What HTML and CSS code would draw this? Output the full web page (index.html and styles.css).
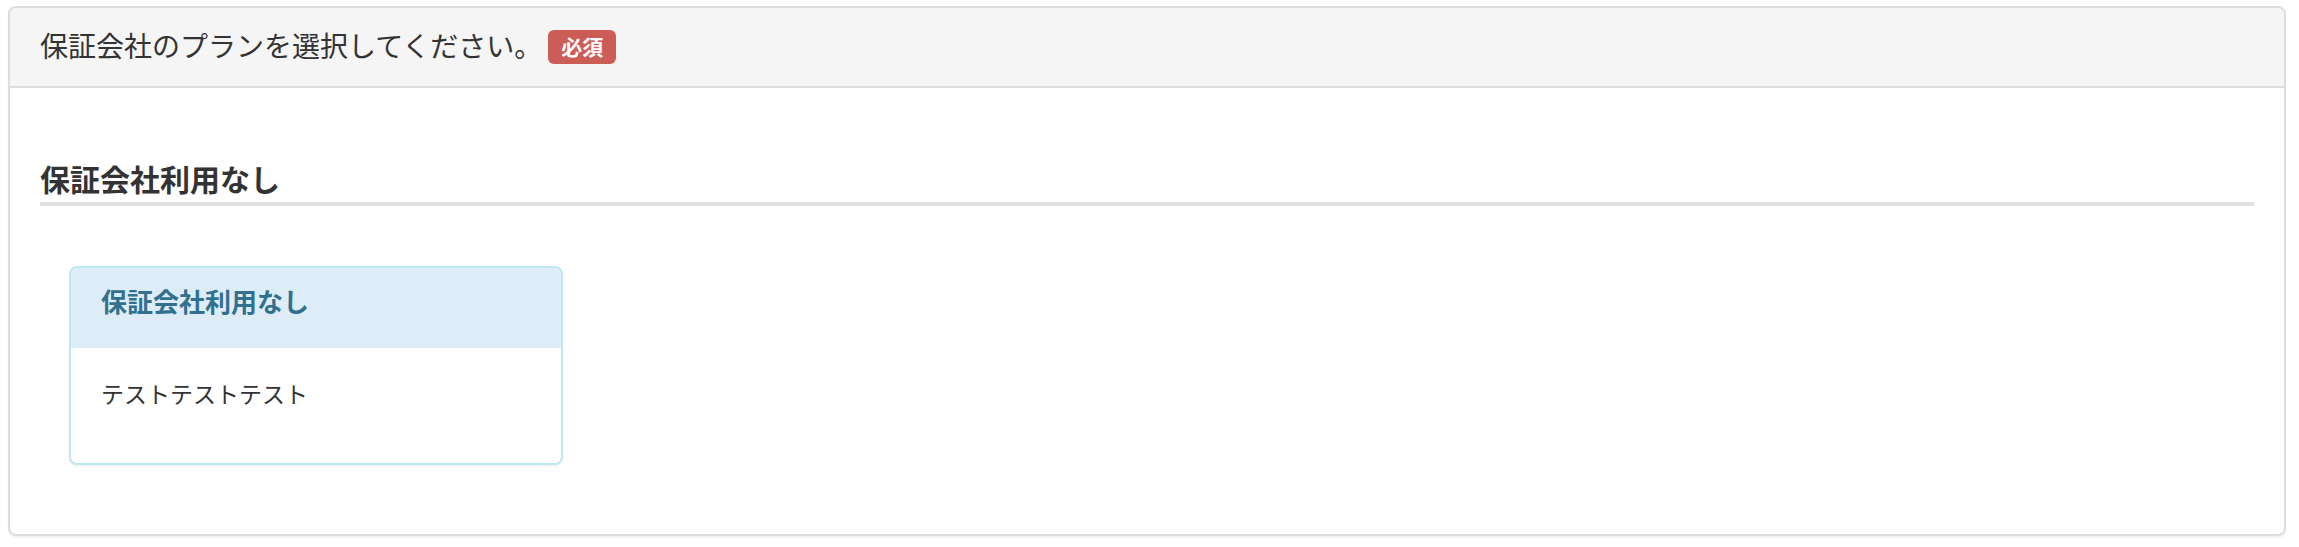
FILE: index.html
```html
<!DOCTYPE html>
<html lang="ja">
<head>
<meta charset="utf-8">
<title>保証会社のプラン選択</title>
<link rel="stylesheet" href="styles.css">
</head>
<body>
<div class="page">
  <section class="panel">
    <div class="panel-heading">
      <span class="panel-label">保証会社のプランを選択してください。</span>
      <span class="badge-required">必須</span>
    </div>
    <div class="panel-body">
      <h3 class="group-title">保証会社利用なし</h3>
      <div class="plan-list">
        <div class="plan-card">
          <div class="plan-card-heading">保証会社利用なし</div>
          <div class="plan-card-body">
            <p class="plan-desc">テストテストテスト</p>
          </div>
        </div>
      </div>
    </div>
  </section>
</div>
</body>
</html>
```

FILE: styles.css
```css
* {
  box-sizing: border-box;
}

html, body {
  margin: 0;
  padding: 0;
  background: #ffffff;
}

body {
  font-family: "Noto Sans CJK JP", "Noto Sans", sans-serif;
  color: #333333;
}

.page {
  padding: 6px 13px 12px 8px;
}

/* outer panel */
.panel {
  border: 2px solid #dddddd;
  border-radius: 8px;
  background: #ffffff;
  box-shadow: 0 2px 2px rgba(0, 0, 0, 0.05);
}

.panel-heading {
  display: flex;
  align-items: center;
  gap: 6px;
  padding: 17px 30px 21px;
  background: #f5f5f5;
  border-bottom: 2px solid #dddddd;
  border-radius: 6px 6px 0 0;
  font-size: 28px;
  line-height: 40px;
  color: #333333;
}

.badge-required {
  display: inline-flex;
  align-items: center;
  justify-content: center;
  height: 34px;
  margin-top: 3px;
  padding: 0 13px 1px;
  background: #cc5c56;
  color: #ffffff;
  font-size: 21px;
  font-weight: 700;
  line-height: 1;
  border-radius: 6px;
}

.panel-body {
  padding: 30px;
}

.group-title {
  margin: 44px 0 0;
  padding-bottom: 7px;
  border-bottom: 4px solid #e1e1e1;
  font-size: 30px;
  line-height: 33px;
  font-weight: 700;
  color: #333333;
}

.plan-list {
  display: flex;
  padding: 60px 0 39px 29px;
}

/* plan card */
.plan-card {
  width: 494px;
  border: 2px solid #bce8f1;
  border-radius: 8px;
  background: #ffffff;
  box-shadow: 0 2px 2px rgba(0, 0, 0, 0.05);
  overflow: hidden;
}

.plan-card-heading {
  padding: 19px 30px 33px;
  background: #ddecf6;
  color: #31708f;
  font-size: 26px;
  line-height: 28px;
  font-weight: 700;
}

.plan-card-body {
  padding: 29px 30px 30px;
}

.plan-desc {
  margin: 0 0 23px;
  font-size: 23px;
  line-height: 33px;
  color: #333333;
}
```
